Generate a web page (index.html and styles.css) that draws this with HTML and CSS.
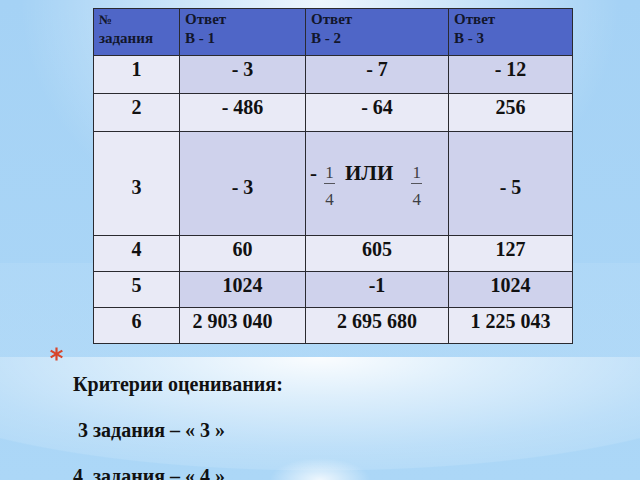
FILE: index.html
```html
<!DOCTYPE html>
<html lang="ru">
<head>
<meta charset="utf-8">
<title>Ответы</title>
<link rel="stylesheet" href="styles.css">
</head>
<body>
<div class="slide">
  <table class="answers">
    <colgroup><col class="c0"><col class="c1"><col class="c2"><col class="c3"></colgroup>
    <thead>
      <tr class="head"><th><span class="no">№</span><br>задания</th><th>Ответ<br>В - 1</th><th>Ответ<br>В - 2</th><th>Ответ<br>В - 3</th></tr>
    </thead>
    <tbody>
      <tr class="r-38 dark"><td>1</td><td>- 3</td><td>- 7</td><td>- 12</td></tr>
      <tr class="r-38"><td>2</td><td>- 486</td><td>- 64</td><td>256</td></tr>
      <tr class="r-tall dark"><td>3</td><td>- 3</td>
        <td class="mixed"><div class="expr"><span class="op">-</span><span class="frac"><span class="num">1</span><span class="den">4</span></span><span class="word">ИЛИ</span><span class="frac second"><span class="num">1</span><span class="den">4</span></span></div></td>
        <td>- 5</td></tr>
      <tr class="r-36"><td>4</td><td>60</td><td>605</td><td>127</td></tr>
      <tr class="r-36 dark"><td>5</td><td>1024</td><td>-1</td><td>1024</td></tr>
      <tr class="r-36"><td>6</td><td class="shift">2 903 040</td><td>2 695 680</td><td>1 225 043</td></tr>
    </tbody>
  </table>
  <div class="notes">
    <span class="bullet"><svg width="15" height="14" viewBox="0 0 15 14"><g stroke="#d8452b" stroke-width="2.2"><line x1="7.5" y1="0.5" x2="7.5" y2="13.5"/><line x1="1.7" y1="3.6" x2="13.3" y2="10.4"/><line x1="1.7" y1="10.4" x2="13.3" y2="3.6"/></g></svg></span>
    <div class="lines">
      <p>Критерии оценивания:</p>
      <p>&nbsp;3 задания – « 3 »</p>
      <p>4&nbsp; задания – « 4 »</p>
    </div>
  </div>
</div>
</body>
</html>
```

FILE: styles.css
```css
html, body {
  margin: 0;
  padding: 0;
}
body {
  width: 640px;
  height: 480px;
  overflow: hidden;
  font-family: "Liberation Serif", "Times New Roman", serif;
  color: #111;
  background-color: #a7d4f6;
  background-image:
    radial-gradient(ellipse 460px 114px at 50% 0, rgba(255,255,255,0.95) 0%, rgba(255,255,255,0.6) 35%, rgba(255,255,255,0.22) 80%, rgba(255,255,255,0.12) 99%, rgba(255,255,255,0) 100%),
    radial-gradient(ellipse 50px 22px at 50% 100%, rgba(255,255,255,0.8), rgba(255,255,255,0) 100%),
    linear-gradient(rgba(255,255,255,0.07), rgba(255,255,255,0.07)),
    radial-gradient(ellipse 300px 250px at 50% 0, rgba(255,255,255,0.8), rgba(255,255,255,0) 100%),
    linear-gradient(to bottom, #a5d2f5, #acd7f7);
  background-repeat: no-repeat;
  background-size: 640px 123px, 640px 60px, 640px 94px, 640px 480px, 640px 480px;
  background-position: 0 357px, 0 420px, 0 263px, 0 0, 0 0;
}
.slide {
  width: 640px;
  height: 480px;
  padding-top: 8px;
  box-sizing: border-box;
}
.answers {
  border-collapse: collapse;
  table-layout: fixed;
  width: 479px;
  margin-left: 93px;
}
.c0 { width: 86px; }
.c1 { width: 126px; }
.c2 { width: 143px; }
.c3 { width: 124px; }
.answers th,
.answers td {
  border: 1px solid #2a2a30;
  padding: 0;
  vertical-align: top;
}
.answers th {
  background: #4f66c7;
  color: #12162c;
  text-align: left;
  font-size: 15px;
  line-height: 19px;
  font-weight: bold;
  padding: 1px 5px 0;
  height: 47px;
  box-sizing: border-box;
}
.answers th .no {
  font-size: 13px;
}
.answers td {
  background: #e9eaf6;
  text-align: center;
  font-size: 20px;
  line-height: 23px;
  font-weight: bold;
  padding-top: 2px;
  box-sizing: border-box;
}
.answers tr.dark td + td {
  background: #cfd2ec;
}
.r-38 td { height: 38px; }
.r-36 td { height: 36px; }
.r-tall td {
  height: 104px;
  padding-top: 44px;
}
.answers td.shift {
  padding-right: 20px;
}
.answers td.mixed {
  text-align: left;
  padding: 30px 0 0 4px;
}
.expr {
  display: flex;
  align-items: flex-start;
}
.op, .word {
  font-size: 21px;
  line-height: 23px;
  font-weight: bold;
}
.op {
  margin-right: 7px;
}
.word {
  margin-left: 10px;
}
.frac {
  display: flex;
  flex-direction: column;
  align-items: stretch;
  width: 11px;
  margin-top: 3px;
  font-size: 17px;
  line-height: 16px;
  font-weight: normal;
  color: #3e3e44;
  text-align: center;
}
.frac.second {
  margin-left: 18px;
}
.num {
  padding-bottom: 2px;
  border-bottom: 1px solid #55555c;
}
.den {
  margin-top: 8px;
}
.notes {
  display: flex;
  margin-left: 49px;
}
.bullet {
  width: 24px;
  flex: none;
  padding-top: 3px;
}
.bullet svg {
  display: block;
}
.lines {
  padding-top: 29px;
}
.lines p {
  margin: 0 0 23px;
  font-size: 20px;
  line-height: 23px;
  font-weight: bold;
  white-space: pre;
}
```
